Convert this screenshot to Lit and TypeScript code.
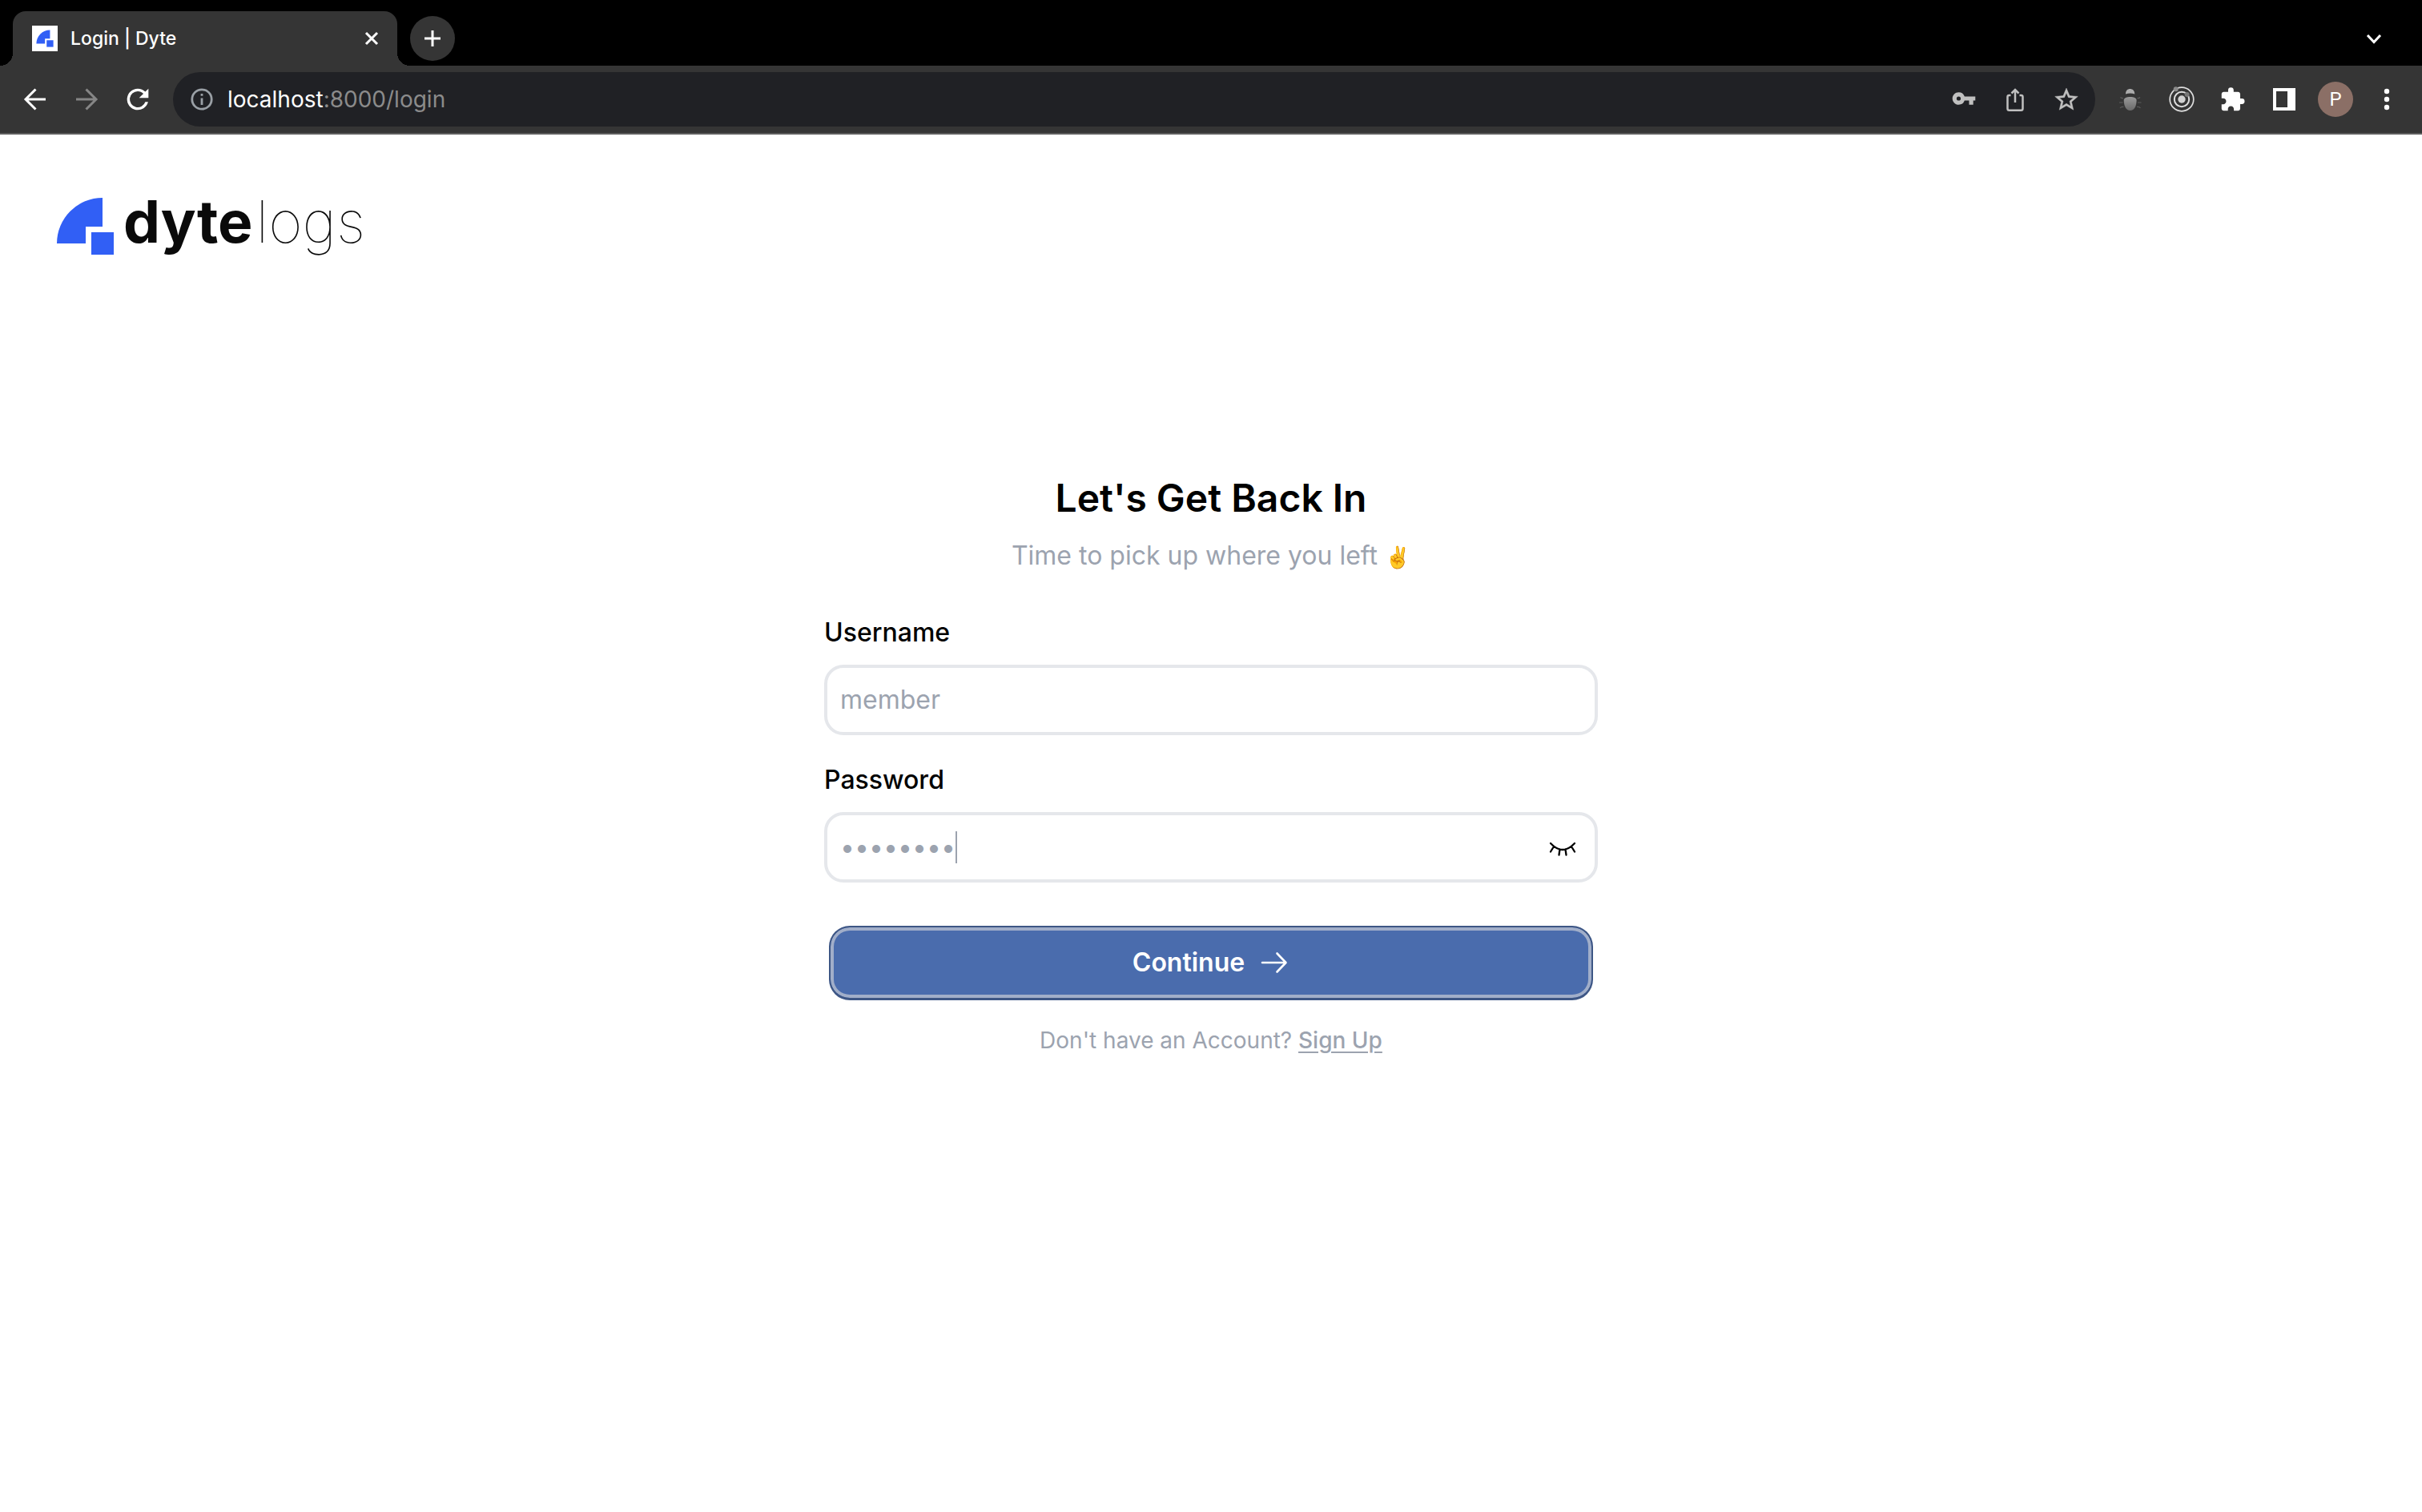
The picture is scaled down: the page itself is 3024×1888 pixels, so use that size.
import { LitElement, html, css, svg } from "lit";
import { customElement, state } from "lit/decorators.js";

const brandMark = svg`
  <path d="M57 0V36H36V57H0A57 57 0 0 1 57 0Z" fill="#315ff5" />
  <rect x="43" y="43" width="28" height="28" fill="#315ff5" />
`;

const glyphs = {
  back: svg`<path d="M33 20H8M20.500 7.500L8 20L20.500 32.500" class="line" />`,
  forward: svg`<path d="M7 20H32M19.500 7.500L32 20L19.500 32.500" class="line" />`,
  reload: svg`<path transform="scale(1.667)" class="solid" d="M17.650 6.350A7.960 7.960 0 0 0 12 4a8 8 0 1 0 7.730 10h-2.080A6 6 0 1 1 12 6c1.660 0 3.140.690 4.220 1.780L13 11h7V4l-2.350 2.350z" />`,
  info: svg`<circle cx="20" cy="20" r="12.200" fill="none" stroke="currentColor" stroke-width="2.800" />
    <path d="M18.600 18.500h2.800V27h-2.800zM18.600 13h2.800v2.800h-2.800z" class="solid" />`,
  key: svg`<path transform="translate(4.400 3.400) scale(1.300)" class="solid" d="M12.650 10A5.990 5.990 0 0 0 7 6c-3.310 0-6 2.690-6 6s2.690 6 6 6a5.990 5.990 0 0 0 5.650-4H17v4h4v-4h2v-4H12.650zM7 14a2 2 0 1 1 0-4 2 2 0 0 1 0 4z" />`,
  share: svg`<path d="M14.500 15H12.500Q10.500 15 10.500 17V31.500Q10.500 33.800 12.500 33.800H27.500Q29.500 33.800 29.500 31.500V17Q29.500 15 27.500 15H25.500M20 24V8.500M15.500 12.500L20 8L24.500 12.500" fill="none" stroke="currentColor" stroke-width="2.500" />`,
  star: svg`<path transform="translate(2.840 3.200) scale(1.430)" class="solid" stroke="currentColor" stroke-width=".300" d="M22 9.240l-7.190-.620L12 2 9.190 8.630 2 9.240l5.460 4.730L5.820 21 12 17.270 18.180 21l-1.630-7.030L22 9.240zM12 15.400l-3.760 2.270 1-4.280-3.320-2.880 4.380-.380L12 6.100l1.710 4.040 4.380.380-3.320 2.880 1 4.280L12 15.400z" />`,
  bug: svg`<defs><linearGradient id="shell" x1="0" y1="0" x2="0" y2="1"><stop offset="0" stop-color="#9a9a9a" /><stop offset="1" stop-color="#6a6a6a" /></linearGradient></defs>
    <path d="M14 13.500C14 9 16.500 7 19.500 7S25.300 9 25.300 13.500Q19.600 11.500 14 13.500Z" fill="#acacac" />
    <path d="M11.700 21C11.700 15.500 27.600 15.500 27.600 21C27.600 28 25 34 19.700 34S11.700 28 11.700 21Z" fill="url(#shell)" />
    <path d="M11 18.500Q9 19 7.500 17.500M10.500 24H6M11.500 29.500Q8.500 29 7 31M28.500 18.500Q30.500 19 32 17.500M29 24H33.500M28 29.500Q31 29 32.500 31" fill="none" stroke="#5c5c5c" stroke-width="1.200" />`,
  rings: svg`<circle cx="20" cy="20" r="14.800" fill="none" stroke="#dedede" stroke-width="1.700" />
    <circle cx="20" cy="20" r="9.200" fill="none" stroke="#dedede" stroke-width="2" />
    <circle cx="20" cy="20" r="4.700" fill="#d2d2d2" />
    <circle cx="12.700" cy="7.300" r="3" fill="#8b8b8b" /><circle cx="26.600" cy="14" r="3" fill="#777" />`,
  puzzle: svg`<path transform="translate(3 4) scale(1.370)" class="solid" d="M20.500 11H19V7c0-1.100-.900-2-2-2h-4V3.500a2.500 2.500 0 0 0-5 0V5H4c-1.100 0-1.990.900-1.990 2v3.800H3.500c1.490 0 2.700 1.210 2.700 2.700s-1.210 2.700-2.700 2.700H2V20c0 1.100.900 2 2 2h3.800v-1.500c0-1.490 1.210-2.700 2.700-2.700 1.490 0 2.700 1.210 2.700 2.700V22H17c1.100 0 2-.900 2-2v-4h1.500a2.500 2.500 0 0 0 0-5z" />`,
  panel: svg`<path fill-rule="evenodd" class="solid" d="M6 6H34V34H6ZM10 10V30H24V10Z" />`,
  dots: svg`<circle cx="20" cy="10" r="3.200" class="solid" /><circle cx="20" cy="20" r="3.200" class="solid" /><circle cx="20" cy="30" r="3.200" class="solid" />`,
  close: svg`<path d="M13 13L27 27M27 13L13 27" class="line" />`,
  plus: svg`<path d="M20 10V30M10 20H30" class="line" />`,
  chevron: svg`<path d="M12 16L20 24.500L28 16" class="line" />`,
  arrow: svg`<path d="M6 20H35M24.500 8.500L35.500 20L24.500 31.500" fill="none" stroke="currentColor" stroke-width="2.600" stroke-linecap="round" stroke-linejoin="round" />`,
  lashes: svg`<path d="M5 15Q20 31 35 15M9 19L5 25.500M16.500 22.500L15.500 29.500M23.500 22.500L24.500 29.500M31 19L35 25.500" fill="none" stroke="currentColor" stroke-width="2.300" stroke-linecap="round" />`,
};

const icon = (name: keyof typeof glyphs) =>
  html`<svg class="icon" viewBox="0 0 40 40" aria-hidden="true">${glyphs[name]}</svg>`;

const iconStyles = css`
  * { box-sizing: border-box; }
  button {
    display: grid;
    place-items: center;
    flex: none;
    padding: 0;
    border: 0;
    background: none;
    color: inherit;
    font: inherit;
    cursor: pointer;
  }
  .icon { display: block; flex: none; width: 40px; height: 40px; }
  .line { fill: none; stroke: currentColor; stroke-width: 3; }
  .solid { fill: currentColor; }
`;

@customElement("browser-bar")
class BrowserBar extends LitElement {
  static styles = [
    iconStyles,
    css`
      :host {
        display: block;
        color: #fff;
        font-family: Inter, "Liberation Sans", sans-serif;
      }
      .tabs {
        display: flex;
        align-items: flex-end;
        height: 82px;
        padding: 0 40px 0 16px;
        background: #000;
      }
      .tab {
        position: relative;
        display: flex;
        align-items: center;
        gap: 16px;
        width: 480px;
        height: 68px;
        padding: 0 12px 0 24px;
        border-radius: 16px 16px 0 0;
        background: #353535;
      }
      .tab::before,
      .tab::after {
        content: "";
        position: absolute;
        bottom: 0;
        width: 16px;
        height: 16px;
      }
      .tab::before {
        right: 100%;
        background: radial-gradient(circle at 0 0, transparent 16px, #353535 16px);
      }
      .tab::after {
        left: 100%;
        background: radial-gradient(circle at 100% 0, transparent 16px, #353535 16px);
      }
      .favicon { width: 32px; height: 32px; background: #fff; }
      .title { flex: 1; font-size: 23px; line-height: 32px; font-weight: 500; }
      .new-tab {
        width: 56px;
        height: 56px;
        margin: 0 auto 6px 16px;
        border-radius: 50%;
        background: #353535;
      }
      .tab-search { margin-bottom: 14px; }
      .toolbar {
        display: flex;
        align-items: center;
        gap: 24px;
        padding: 8px 24px;
        border-bottom: 2px solid #5d5d5d;
        background: #353535;
      }
      .muted { color: #868686; }
      .address {
        display: flex;
        flex: 1;
        align-items: center;
        gap: 24px;
        height: 68px;
        padding: 0 16px;
        border-radius: 34px;
        background: #202125;
        color: #c0c0c0;
      }
      .site { display: flex; flex: 1; align-items: center; gap: 12px; color: #9aa0a6; }
      .url {
        flex: 1;
        min-width: 0;
        padding: 0;
        font-size: 28px;
        line-height: 36px;
        color: #8b8b8b;
      }
      .url b { font-weight: 400; color: #fff; }
      .avatar {
        width: 44px;
        height: 44px;
        margin: 0 -2px;
        border-radius: 50%;
        background: #8b6f66;
        font-family: Roboto, sans-serif;
        font-size: 24px;
      }
    `,
  ];

  render() {
    return html`
      <div class="tabs">
        <div class="tab">
          <svg class="favicon" viewBox="-18 -18 107 107" aria-hidden="true">${brandMark}</svg>
          <span class="title">Login | Dyte</span>
          <button aria-label="Close tab">${icon("close")}</button>
        </div>
        <button class="new-tab" aria-label="New tab">${icon("plus")}</button>
        <button class="tab-search" aria-label="Search tabs">${icon("chevron")}</button>
      </div>
      <div class="toolbar">
        <button aria-label="Back">${icon("back")}</button>
        <button class="muted" aria-label="Forward">${icon("forward")}</button>
        <button aria-label="Reload">${icon("reload")}</button>
        <div class="address">
          <div class="site">
            <button aria-label="Site information">${icon("info")}</button>
            <span class="url"><b>localhost</b>:8000/login</span>
          </div>
          <button aria-label="Passwords">${icon("key")}</button>
          <button aria-label="Share">${icon("share")}</button>
          <button aria-label="Bookmark">${icon("star")}</button>
        </div>
        <button aria-label="Debugger">${icon("bug")}</button>
        <button aria-label="Orbit">${icon("rings")}</button>
        <button aria-label="Extensions">${icon("puzzle")}</button>
        <button aria-label="Side panel">${icon("panel")}</button>
        <button class="avatar" aria-label="Profile">P</button>
        <button aria-label="Menu">${icon("dots")}</button>
      </div>
    `;
  }
}

@customElement("login-form")
class LoginForm extends LitElement {
  @state() private revealed = false;

  static styles = [
    iconStyles,
    css`
      :host {
        display: block;
        width: 966px;
        max-width: 100%;
        color: #000;
        font-family: Inter, "Liberation Sans", sans-serif;
        font-size: 32px;
        line-height: 48px;
      }
      form { display: flex; flex-direction: column; }
      h1 {
        margin: 0;
        font-size: 48px;
        line-height: 64px;
        font-weight: 600;
        text-align: center;
      }
      .lead { margin: 16px 0 48px; color: #9ca3af; text-align: center; }
      .emoji { font-size: 26px; line-height: 32px; }
      label { margin-bottom: 16px; font-weight: 500; }
      .field {
        display: flex;
        align-items: center;
        height: 88px;
        margin-bottom: 32px;
        padding: 0 20px 0 16px;
        border: 4px solid #e5e7eb;
        border-radius: 24px;
      }
      input {
        padding: 0;
        border: 0;
        outline: 0;
        background: none;
        color: #9ca3af;
        font: inherit;
      }
      .wide { flex: 1; min-width: 0; }
      .secret { field-sizing: content; }
      .caret { width: 2px; height: 40px; margin-right: auto; background: #9ca3af; }
      .submit {
        display: flex;
        justify-content: center;
        gap: 16px;
        height: 93px;
        margin: 22px 6px 26px;
        border: 2px solid #3d5685;
        border-bottom-width: 3px;
        border-radius: 26px;
        background: #4a6cad;
        box-shadow: inset 0 0 0 4px #a1aec9;
        color: #fff;
        font-weight: 600;
      }
      .signup {
        margin: 0;
        color: #9ca3af;
        font-size: 28px;
        line-height: 48px;
        text-align: center;
      }
      a { color: inherit; font-weight: 500; text-underline-offset: 4px; }
    `,
  ];

  render() {
    return html`
      <form @submit=${(e: Event) => e.preventDefault()}>
        <h1>Let's Get Back In</h1>
        <p class="lead">Time to pick up where you left <span class="emoji">✌️</span></p>
        <label for="username">Username</label>
        <div class="field">
          <input class="wide" id="username" value="member" autocomplete="username" />
        </div>
        <label for="password">Password</label>
        <div class="field">
          <input
            class="secret"
            id="password"
            type=${this.revealed ? "text" : "password"}
            value="password"
            autocomplete="current-password"
          />
          <span class="caret"></span>
          <button
            type="button"
            aria-label="Show password"
            @click=${() => (this.revealed = !this.revealed)}
          >${icon("lashes")}</button>
        </div>
        <button class="submit" type="submit">Continue ${icon("arrow")}</button>
        <p class="signup">Don't have an Account? <a href="#signup">Sign Up</a></p>
      </form>
    `;
  }
}

@customElement("app-root")
export class AppRoot extends LitElement {
  static styles = css`
    :host {
      display: flex;
      flex-direction: column;
      min-height: 100vh;
      background: #fff;
    }
    header { padding: 66px 71px 0; }
    .brand {
      display: flex;
      align-items: center;
      gap: 12px;
      color: #0a0a0a;
      font-family: Inter, "Liberation Sans", sans-serif;
      font-size: 73px;
      line-height: 86px;
      text-decoration: none;
    }
    .mark { width: 71px; height: 71px; }
    .name { display: flex; gap: 4px; padding-bottom: 10px; }
    .bold { font-weight: 700; }
    .thin { font-weight: 100; }
    main { display: flex; justify-content: center; padding: 260px 32px 64px; }
  `;

  render() {
    return html`
      <browser-bar></browser-bar>
      <header>
        <a class="brand" href="#home">
          <svg class="mark" viewBox="0 0 71 71" aria-hidden="true">${brandMark}</svg>
          <span class="name"><span class="bold">dyte</span><span class="thin">logs</span></span>
        </a>
      </header>
      <main><login-form></login-form></main>
    `;
  }
}
